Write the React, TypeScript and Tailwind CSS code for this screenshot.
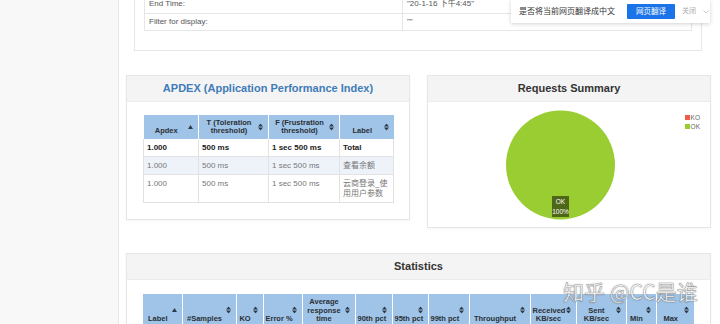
import React from 'react'

const SANS = "font-['Liberation_Sans','Noto_Sans_CJK_SC',Arial,sans-serif]"

function SortIcon({ dir }: { dir: 'asc' | 'both' }) {
  if (dir === 'asc') {
    return (
      <svg width="5" height="4" viewBox="0 0 5 4" className="absolute right-[5px] top-1/2 -translate-y-1/2">
        <path d="M2.5 0 L5 4 L0 4 Z" fill="#2f3a48" />
      </svg>
    )
  }
  return (
    <svg width="5" height="7" viewBox="0 0 5 7" className="absolute right-[5px] top-1/2 -translate-y-1/2">
      <path d="M2.5 0 L5 3 L0 3 Z M2.5 7 L5 4 L0 4 Z" fill="#2f3a48" />
    </svg>
  )
}

function Th({ label, w, dir = 'both' }: { label: React.ReactNode; w: number; dir?: 'asc' | 'both' }) {
  return (
    <th
      style={{ width: w }}
      className="relative whitespace-nowrap border-r border-white/60 last:border-r-0 bg-[#9fc4e7] pl-[2px] pr-[11px] pb-[3px] pt-[4px] align-bottom text-center text-[7.5px] font-bold leading-[8.5px] text-[#2b2f36]"
    >
      {label}
      <SortIcon dir={dir} />
    </th>
  )
}

function Panel({
  title,
  titleClass,
  className,
  children,
}: {
  title: string
  titleClass?: string
  className?: string
  children: React.ReactNode
}) {
  return (
    <div className={`border border-[#e6e6e6] bg-white shadow-[0_1px_2px_rgba(0,0,0,0.04)] ${className ?? ''}`}>
      <div className={`h-[26px] flex items-center justify-center bg-[#f4f4f4] border-b border-[#ececec] text-[11px] font-bold ${titleClass ?? 'text-[#333]'}`}>
        {title}
      </div>
      {children}
    </div>
  )
}

const APDEX_ROWS = [
  { apdex: '1.000', t: '500 ms', f: '1 sec 500 ms', label: 'Total', bold: true },
  { apdex: '1.000', t: '500 ms', f: '1 sec 500 ms', label: '查看余额', alt: true },
  { apdex: '1.000', t: '500 ms', f: '1 sec 500 ms', label: '云商登录_使用用户参数' },
]

const STAT_COLS: { label: React.ReactNode; w: number; dir?: 'asc' | 'both' }[] = [
  { label: 'Label', w: 39, dir: 'asc' },
  { label: '#Samples', w: 54 },
  { label: 'KO', w: 27 },
  { label: 'Error %', w: 39 },
  { label: <>Average<br />response<br />time</>, w: 53 },
  { label: '90th pct', w: 37 },
  { label: '95th pct', w: 36 },
  { label: '99th pct', w: 41 },
  { label: 'Throughput', w: 61 },
  { label: <>Received<br />KB/sec</>, w: 46 },
  { label: <>Sent<br />KB/sec</>, w: 50 },
  { label: 'Min', w: 30 },
  { label: 'Max', w: 38 },
]

export default function App() {
  return (
    <div className={`relative flex w-[720px] h-[324px] overflow-hidden bg-white ${SANS}`}>
      {/* left nav strip */}
      <div className="w-[119px] flex-shrink-0 bg-[#f8f8f8] border-r border-[#e7e7e7]" />

      <div className="flex-1 pl-[7px] pr-[9px] -mt-[4px]">
        {/* dashboard info panel (scrolled) */}
        <div className="mx-[8px] mr-[9px] border border-t-0 border-[#e6e6e6] px-[9px] pb-[19px]">
          <table className="w-full table-fixed border-collapse text-[8px] text-[#555]">
            <tbody>
              <tr className="h-[17px] border-b border-[#e6e6e6]">
                <td className="w-[258px] border-x border-[#e6e6e6] pl-[4px]">End Time:</td>
                <td className="border-r border-[#e6e6e6] pl-[4px]">"20-1-16 下午4:45"</td>
              </tr>
              <tr className="h-[17px] border-b border-[#e6e6e6]">
                <td className="border-x border-[#e6e6e6] pl-[4px]">Filter for display:</td>
                <td className="border-r border-[#e6e6e6] pl-[4px]">""</td>
              </tr>
            </tbody>
          </table>
        </div>

        <div className="mt-[24px] flex items-start gap-[17px]">
          <Panel title="APDEX (Application Performance Index)" titleClass="text-[#3f7cb9]" className="w-[284px]">
            <div className="px-[16px] pt-[13px] pb-[16px]">
              <table className="w-full table-fixed border-collapse">
                <thead>
                  <tr className="h-[23px]">
                    <Th label="Apdex" w={55} dir="asc" />
                    <Th label={<>T (Toleration<br />threshold)</>} w={70} />
                    <Th label={<>F (Frustration<br />threshold)</>} w={71} />
                    <Th label="Label" w={54} />
                  </tr>
                </thead>
                <tbody className="text-[8px] leading-[10px]">
                  {APDEX_ROWS.map((r, i) => (
                    <tr
                      key={i}
                      className={`${r.alt ? 'bg-[#eef3fa]' : 'bg-white'} ${r.bold ? 'font-bold text-[#222]' : 'text-[#777]'} border-b border-[#e2e2e2]`}
                    >
                      <td className="border-x border-[#e2e2e2] px-[3px] pt-[4px] pb-[3px] align-top">{r.apdex}</td>
                      <td className="border-r border-[#e2e2e2] px-[3px] pt-[4px] pb-[3px] align-top">{r.t}</td>
                      <td className="border-r border-[#e2e2e2] px-[3px] pt-[4px] pb-[3px] align-top">{r.f}</td>
                      <td className="border-r border-[#e2e2e2] px-[3px] pt-[4px] pb-[3px] align-top break-all">{r.label}</td>
                    </tr>
                  ))}
                </tbody>
              </table>
            </div>
          </Panel>

          <Panel title="Requests Summary" className="w-[284px]">
            <div className="relative h-[125px]">
              <svg width="282" height="125" viewBox="0 0 282 125">
                <circle cx="132.5" cy="63" r="54.5" fill="#9acd32" />
                <rect x="124" y="94" width="17" height="21" fill="#4e6618" />
                <text x="132.5" y="102" textAnchor="middle" fontSize="6.5" fill="#fff" fontFamily="Liberation Sans, Arial, sans-serif">OK</text>
                <text x="132.5" y="112" textAnchor="middle" fontSize="6.5" fill="#fff" fontFamily="Liberation Sans, Arial, sans-serif">100%</text>
              </svg>
              <div className="absolute right-[10px] top-[12px] flex flex-col gap-[1px] text-[6.5px] leading-[8px] text-[#666]">
                <div className="flex items-center gap-[1px]">
                  <span className="w-[5px] h-[5px] bg-[#ee5d4a]" />KO
                </div>
                <div className="flex items-center gap-[1px]">
                  <span className="w-[5px] h-[5px] bg-[#9acd32]" />OK
                </div>
              </div>
            </div>
          </Panel>
        </div>

        <Panel title="Statistics" className="mt-[25px]">
          <div className="px-[16px] pt-[14px]">
            <table className="table-fixed border-collapse w-[551px]">
              <thead>
                <tr className="h-[33px]">
                  {STAT_COLS.map((c, i) => (
                    <Th key={i} label={c.label} w={c.w} dir={c.dir} />
                  ))}
                </tr>
              </thead>
            </table>
          </div>
        </Panel>
      </div>

      {/* browser translate prompt */}
      <div className="absolute left-[511px] top-0 w-[199px] h-[23px] flex items-center bg-white shadow-[0_1px_4px_rgba(0,0,0,0.18)] pl-[8px] text-[8px]">
        <span className="text-[#333]">是否将当前网页翻译成中文</span>
        <span className="ml-[12px] w-[48px] h-[15px] flex items-center justify-center rounded-[1px] bg-[#1a73e8] text-white text-[7.5px]">网页翻译</span>
        <span className="ml-[7px] text-[#aaa] text-[7px]">关闭</span>
        <svg width="6" height="4" viewBox="0 0 6 4" className="ml-[7px]">
          <path d="M0.5 0.5 L3 3 L5.5 0.5" fill="none" stroke="#bbb" strokeWidth="0.8" />
        </svg>
      </div>

      {/* watermark */}
      <div className="absolute left-[563px] top-[279px] text-[21px] leading-[24px] text-white/90 [-webkit-text-stroke:0.6px_rgba(90,90,90,0.55)] [text-shadow:0_0_2px_rgba(0,0,0,0.25)] font-['Noto_Sans_CJK_SC',sans-serif]">
        知乎 @CC是谁
      </div>
    </div>
  )
}
